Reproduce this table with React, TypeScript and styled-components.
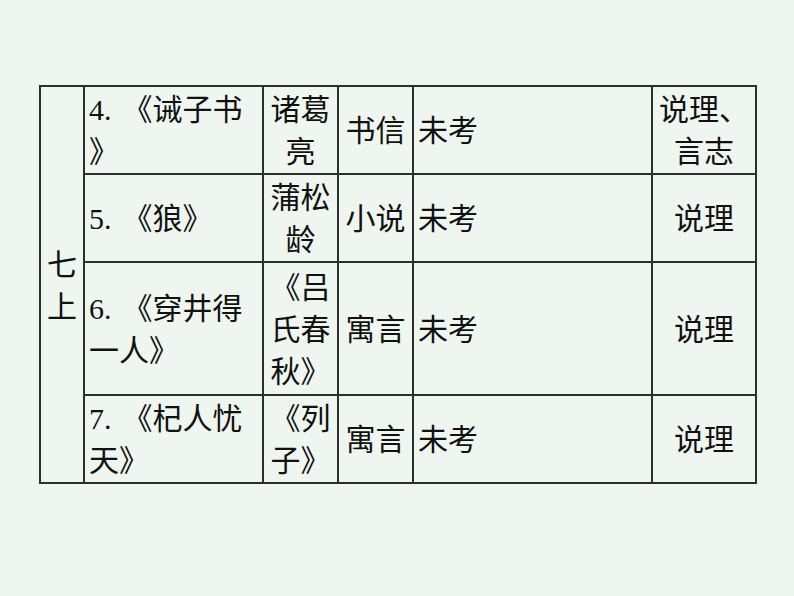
import React from "react";
import styled, { createGlobalStyle } from "styled-components";

const GlobalStyle = createGlobalStyle`
  html, body {
    margin: 0;
    padding: 0;
    background: #eef6ef;
  }
`;

type Row = {
  num: string;
  title: string[];
  author: string[];
  genre: string;
  exam: string;
  theme: string[];
  height: number;
};

// line breaks follow the slide exactly
const rows: Row[] = [
  { num: "4.", title: ["《诫子书", "》"], author: ["诸葛", "亮"], genre: "书信", exam: "未考", theme: ["说理、", "言志"], height: 87 },
  { num: "5.", title: ["《狼》"], author: ["蒲松", "龄"], genre: "小说", exam: "未考", theme: ["说理"], height: 88 },
  { num: "6.", title: ["《穿井得", "一人》"], author: ["《吕", "氏春", "秋》"], genre: "寓言", exam: "未考", theme: ["说理"], height: 133 },
  { num: "7.", title: ["《杞人忧", "天》"], author: ["《列", "子》"], genre: "寓言", exam: "未考", theme: ["说理"], height: 88 },
];

const colWidths = [44, 179, 75, 75, 239, 104];

const Lines = ({ lines, num }: { lines: string[]; num?: string }) => (
  <>
    {lines.map((l, i) => (
      <Line key={i}>
        {i === 0 && num && <Num>{num}</Num>}
        {l}
      </Line>
    ))}
  </>
);

const App = () => {
  return (
    <Page lang="zh-CN">
      <GlobalStyle />
      <Table>
        <colgroup>
          {colWidths.map((w, i) => (
            <Col key={i} $w={w} />
          ))}
        </colgroup>
        <tbody>
          {rows.map((r, i) => (
            <Tr key={i} $h={r.height}>
              {i === 0 && (
                <Cell rowSpan={4} $align="center">
                  <Lines lines={["七", "上"]} />
                </Cell>
              )}
              <Cell $align="left">
                <Lines lines={r.title} num={r.num} />
              </Cell>
              <Cell $align="center">
                <Lines lines={r.author} />
              </Cell>
              <Cell $align="center">{r.genre}</Cell>
              <Cell $align="left">{r.exam}</Cell>
              <Cell $align="center">
                <Lines lines={r.theme} />
              </Cell>
            </Tr>
          ))}
        </tbody>
      </Table>
    </Page>
  );
};

const Page = styled.div`
  padding: 85px 0 0 39px;
  min-height: 596px;
  box-sizing: border-box;
  font-family: "Liberation Serif", "Noto Sans CJK SC", serif;
  color: #111;
`;

const Table = styled.table`
  border-collapse: collapse;
  table-layout: fixed;
  width: 716px;
`;

const Col = styled.col<{ $w: number }>`
  width: ${(p) => p.$w}px;
`;

const Tr = styled.tr<{ $h: number }>`
  height: ${(p) => p.$h}px;
`;

const Cell = styled.td<{ $align: "left" | "center" }>`
  border: 2px solid #2e2e2e;
  padding: 2px 4px 0 4px;
  font-size: 30px;
  line-height: 42px;
  text-align: ${(p) => p.$align};
  vertical-align: middle;
  white-space: nowrap;
`;

const Line = styled.div`
  white-space: pre;
`;

const Num = styled.span`
  margin-right: 11px;
`;

export default App;
